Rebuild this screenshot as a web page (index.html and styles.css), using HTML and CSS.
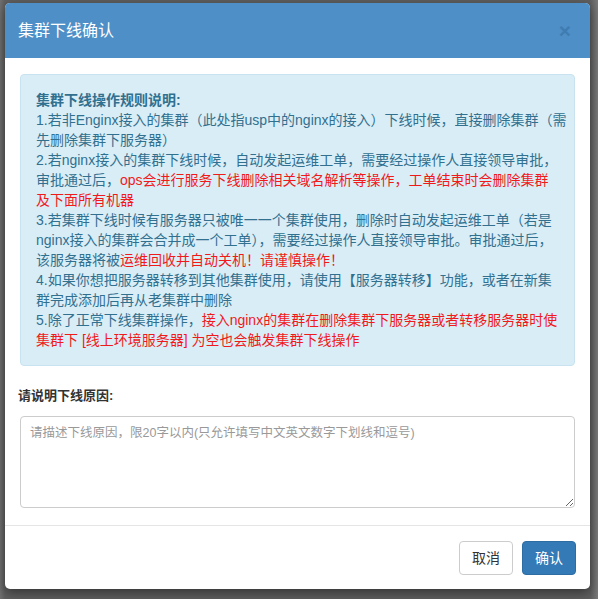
FILE: index.html
```html
<!DOCTYPE html>
<html lang="zh-CN">
<head>
<meta charset="utf-8">
<title>集群下线确认</title>
<link rel="stylesheet" href="styles.css">
</head>
<body>
<div class="backdrop">
  <div class="modal">
    <div class="modal-header">
      <h4 class="modal-title">集群下线确认</h4>
      <span class="close">×</span>
    </div>
    <div class="modal-body">
      <div class="alert">
        <div class="alert-title">集群下线操作规则说明:</div>
        <div>1.若非Enginx接入的集群（此处指usp中的nginx的接入）下线时候，直接删除集群（需<br>先删除集群下服务器）</div>
        <div>2.若nginx接入的集群下线时候，自动发起运维工单，需要经过操作人直接领导审批，<br>审批通过后，<span class="red">ops会进行服务下线删除相关域名解析等操作，工单结束时会删除集群<br>及下面所有机器</span></div>
        <div>3.若集群下线时候有服务器只被唯一一个集群使用，删除时自动发起运维工单（若是<br>nginx接入的集群会合并成一个工单），需要经过操作人直接领导审批。审批通过后，<br>该服务器将被<span class="red">运维回收并自动关机！请谨慎操作！</span></div>
        <div>4.如果你想把服务器转移到其他集群使用，请使用【服务器转移】功能，或者在新集<br>群完成添加后再从老集群中删除</div>
        <div>5.除了正常下线集群操作，<span class="red">接入nginx的集群在删除集群下服务器或者转移服务器时使<br>集群下 [线上环境服务器] 为空也会触发集群下线操作</span></div>
      </div>
      <label class="field-label">请说明下线原因:</label>
      <textarea class="reason" placeholder="请描述下线原因，限20字以内(只允许填写中文英文数字下划线和逗号)"></textarea>
    </div>
    <div class="modal-footer">
      <button class="btn btn-default">取消</button>
      <button class="btn btn-primary">确认</button>
    </div>
  </div>
</div>
</body>
</html>
```

FILE: styles.css
```css
html, body {
  margin: 0;
  padding: 0;
}
body {
  background: #6c6c6c;
  font-family: "Liberation Sans", "Noto Sans CJK SC", sans-serif;
  font-size: 14px;
  color: #333;
}
.backdrop {
  width: 598px;
  height: 599px;
  overflow: hidden;
  background: linear-gradient(90deg, #707070 0, #5f5f5f 5px, #5f5f5f 590px, #7a7a7a 598px);
}
.modal {
  margin: 3px 0 0 5px;
  width: 585px;
  background: #fff;
  border-radius: 5px;
  box-shadow: 0 4px 12px rgba(0, 0, 0, 0.45);
  overflow: hidden;
}
.modal-header {
  height: 55px;
  background: #4e8fc7;
  display: flex;
  align-items: center;
  justify-content: space-between;
  padding: 0 19px 0 13px;
}
.modal-title {
  margin: 0;
  color: #fff;
  font-size: 16px;
  font-weight: normal;
  line-height: 24px;
}
.close {
  color: #3a74a8;
  font-size: 21px;
  font-weight: bold;
  line-height: 1;
  opacity: 0.7;
}
.modal-body {
  padding: 16px 15px 17px 15px;
  display: flex;
  flex-direction: column;
}
.alert {
  background: #d9edf7;
  border: 1px solid #c8e3ef;
  border-radius: 4px;
  color: #31708f;
  padding: 15px 15px 15px 15px;
  line-height: 20px;
  white-space: nowrap;
}
.alert-title {
  font-weight: bold;
}
.red {
  color: #f01a1a;
}
.field-label {
  margin: 20px 0 10px -2px;
  font-size: 13px;
  font-weight: bold;
  line-height: 20px;
  color: #333;
}
.reason {
  height: 92px;
  box-sizing: border-box;
  border: 1px solid #ccc;
  border-radius: 4px;
  padding: 6px 9px;
  font-family: inherit;
  font-size: 12.5px;
  line-height: 20px;
  resize: vertical;
  margin: 0;
}
.reason::placeholder {
  color: #999;
}
.modal-footer {
  border-top: 1px solid #e5e5e5;
  padding: 15px 14px 14px 15px;
  display: flex;
  justify-content: flex-end;
  gap: 9px;
}
.btn {
  height: 34px;
  padding: 6px 12px;
  font-family: inherit;
  font-size: 14px;
  line-height: 20px;
  border-radius: 4px;
  border: 1px solid;
  box-sizing: border-box;
  margin: 0;
}
.btn-default {
  background: #fff;
  border-color: #ccc;
  color: #333;
}
.btn-primary {
  background: #337ab7;
  border-color: #2e6da4;
  color: #fff;
}
```
